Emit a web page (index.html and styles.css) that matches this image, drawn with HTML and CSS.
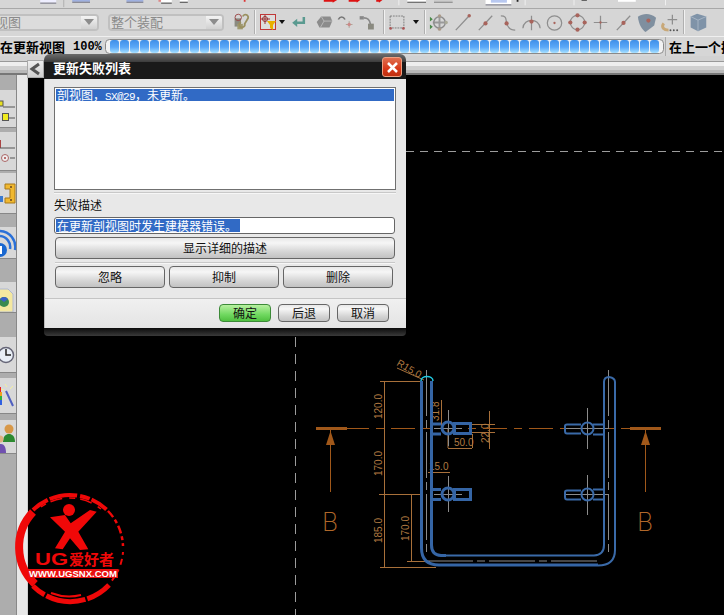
FILE: index.html
```html
<!DOCTYPE html>
<html lang="zh">
<head>
<meta charset="utf-8">
<title>更新失败列表</title>
<link rel="stylesheet" href="styles.css">
</head>
<body>
<div class="app">
  <svg class="strip" width="724" height="9" viewBox="0 0 724 9">
    <rect x="0" y="0" width="18" height="3" fill="#eef"/><rect x="0" y="3" width="18" height="1" fill="#667"/>
    <rect x="26" y="0" width="1" height="8" fill="#aaa"/>
    <rect x="36" y="0" width="20" height="2" fill="#9fb0e0"/><rect x="36" y="2" width="20" height="1" fill="#667"/>
    <rect x="97" y="0" width="19" height="2" fill="#9fb0e0"/><rect x="97" y="2" width="19" height="1" fill="#667"/>
    <rect x="133" y="0" width="3" height="2" fill="#d88"/>
    <rect x="136" y="0" width="12" height="3" fill="#fff"/><rect x="136" y="3" width="12" height="1" fill="#333"/>
    <rect x="157" y="0" width="9" height="2" fill="#fff"/><rect x="157" y="2" width="9" height="1" fill="#333"/>
    <rect x="229" y="0" width="2" height="2" fill="#d33"/>
    <path d="M319 0h10v-1l5 1-5 3v-1h-10z" fill="#d11"/><path d="M347 0h9l4 0-4 3v-1h-9z" fill="#d11"/><path d="M378 0h7l-4 3v-1h-3z" fill="#d11" />
    <rect x="403" y="0" width="1" height="6" fill="#f2f2f2"/>
    <rect x="413" y="0" width="21" height="2" fill="#fff"/><rect x="413" y="2" width="21" height="1" fill="#444"/>
    <rect x="443" y="0" width="21" height="2" fill="#ccc"/><rect x="443" y="2" width="21" height="1" fill="#777"/>
    <rect x="501" y="0" width="29" height="5" fill="#fff"/><rect x="507" y="0" width="18" height="3" fill="#b8c8f0"/><rect x="501" y="5" width="29" height="1" fill="#667"/>
    <rect x="536" y="0" width="2" height="2" fill="#222"/>
    <rect x="545" y="0" width="1" height="6" fill="#f2f2f2"/>
    <rect x="600" y="0" width="1" height="6" fill="#f2f2f2"/>
    <rect x="609" y="0" width="6" height="1" fill="#555"/>
    <rect x="650" y="0" width="20" height="2" fill="#fff"/>
    <rect x="703" y="0" width="1" height="6" fill="#f2f2f2"/>
  </svg>

  <div class="toolbar">
    <div class="combo combo-first"><span class="combo-text">视图</span><span class="combo-arrow"></span></div>
    <div class="combo combo-second"><span class="combo-text">整个装配</span><span class="combo-arrow"></span></div>
    <svg class="ti ti-link" viewBox="0 0 24 24"><rect x="5" y="8" width="7" height="9" fill="#8a8a80"/><rect x="8" y="14" width="6" height="6" fill="#a09a70"/><circle cx="9" cy="7" r="3.500" fill="none" stroke="#944"/><path d="M14 6a3 3 0 1 1 5 3l-3 5a3 3 0 1 1-4-2" fill="none" stroke="#9a9060" stroke-width="2"/></svg>
    <span class="sep sep-a"></span>
    <svg class="ti ti-filter" viewBox="0 0 24 24"><rect x="4.500" y="4.500" width="15" height="15" fill="#ddd" stroke="#c03838"/><path d="M5 9h9M9 5v9" stroke="#933"/><circle cx="9" cy="9" r="2.500" fill="none" stroke="#933"/><path d="M11 11h9l-3 4v5l-3-2v-3z" fill="#e8b000"/></svg>
    <span class="drop drop-a"></span>
    <svg class="ti ti-return" viewBox="0 0 24 24"><path d="M19 6v7h-10" fill="none" stroke="#5a9a90" stroke-width="3"/><path d="M11 8l-6 5 6 5z" fill="#5a9a90"/></svg>
    <svg class="ti ti-box" viewBox="0 0 24 24"><path d="M4 12l5-6h10l2 5-3 7H7z" fill="#8c8c8c"/><path d="M9 6l3 5h9M12 11l-4 7" stroke="#bbb" fill="none"/></svg>
    <svg class="ti ti-rot" viewBox="0 0 24 24"><path d="M4 9c2-4 6-4 8 0" fill="none" stroke="#777" stroke-width="2"/><path d="M13 15h8M17 11v8" stroke="#a98"/><circle cx="17" cy="15" r="2" fill="#c88"/></svg>
    <svg class="ti ti-bend" viewBox="0 0 24 24"><rect x="2" y="5" width="5" height="4" fill="#888"/><path d="M7 7c5 0 7 2 8 8" stroke="#888" stroke-width="2" fill="none"/><rect x="12" y="14" width="7" height="7" fill="#8a8a80"/></svg>
    <span class="sep sep-b"></span>
    <svg class="ti ti-sel" viewBox="0 0 24 24"><rect x="4.500" y="5.500" width="15" height="13" fill="none" stroke="#777" stroke-dasharray="2 1"/><circle cx="5" cy="19" r="1.500" fill="#a55"/><circle cx="19" cy="19" r="1.500" fill="#a55"/></svg>
    <span class="drop drop-b"></span>
    <span class="sep sep-c"></span>
    <svg class="ti" viewBox="0 0 24 24"><path d="M12 5v14M5 12h14" stroke="#999" stroke-width="2"/><circle cx="12" cy="12" r="6" fill="none" stroke="#8c8c8c" stroke-width="1.500"/><circle cx="12" cy="5" r="1.700" fill="#a98"/><circle cx="12" cy="19" r="1.700" fill="#a98"/><circle cx="19" cy="12" r="1.700" fill="#aa9"/><path d="M2 6l3 2.500-3 2.500zM2 14l3 2.500-3 2.500z" fill="#4a8a4a"/></svg>
    <svg class="ti" viewBox="0 0 24 24"><path d="M5 20L19 5" class="gl"/><circle cx="19" cy="5" r="1.800" class="rd"/></svg>
    <svg class="ti" viewBox="0 0 24 24"><path d="M5 20L19 5" class="gl"/><circle cx="12" cy="13" r="2.200" class="rd"/></svg>
    <svg class="ti" viewBox="0 0 24 24"><path d="M4 5c6 0 5 3 6 7 1 5 3 8 9 8" class="gl"/><circle cx="10" cy="13" r="2.200" class="rd"/></svg>
    <svg class="ti" viewBox="0 0 24 24"><path d="M3 18c1-11 17-11 18 0M12 5v15" class="gl"/><circle cx="12" cy="11" r="2.200" class="rd"/></svg>
    <svg class="ti" viewBox="0 0 24 24"><circle cx="12" cy="12.500" r="7.500" class="gl"/><circle cx="12" cy="12.500" r="1.200" class="rd"/></svg>
    <svg class="ti" viewBox="0 0 24 24"><circle cx="12" cy="12" r="7.500" class="gl"/><circle cx="12" cy="4.500" r="2.200" class="rd"/><circle cx="12" cy="19.500" r="2.200" class="rd"/><circle cx="4.500" cy="12" r="2.200" class="rd"/><circle cx="19.500" cy="12" r="2.200" class="rd"/></svg>
    <svg class="ti" viewBox="0 0 24 24"><path d="M12 5v14M5 12h14" class="gl"/><circle cx="12" cy="12" r="1.200" class="rd"/></svg>
    <svg class="ti" viewBox="0 0 24 24"><path d="M5 20L19 5" class="gl"/><circle cx="12" cy="12.500" r="2.200" class="rd"/></svg>
    <svg class="ti" viewBox="0 0 24 24"><path d="M3 6c6-4 13-4 19 1l-2 8-9 7c-4-3-7-8-8-16z" fill="#7f8f9f"/><circle cx="14" cy="10" r="2.200" class="rd"/></svg>
    <svg class="ti" viewBox="0 0 24 24"><path d="M15 4v10M10 9h10" class="gl"/><path d="M6 13c-3 4 0 7 5 7" fill="none" stroke="#c8a878" stroke-width="3"/><circle cx="13" cy="20" r="1" fill="#555"/><circle cx="16.500" cy="20" r="1" fill="#555"/><circle cx="20" cy="20" r="1" fill="#555"/></svg>
    <span class="sep sep-d"></span>
    <svg class="ti ti-cube" viewBox="0 0 24 24"><path d="M4 6l7-3 10 3v12l-9 4-8-4z" fill="#7f93a8"/><path d="M4 6l8 4 9-4M12 10v12" stroke="#a9b7c6" fill="none"/></svg>
  </div>

  <div class="status">
    <span class="status-text">在更新视图</span>
    <span class="status-pct">100%</span>
    <svg class="progress" width="559" height="15" viewBox="0 0 559 15">
      <defs>
        <linearGradient id="seg" x1="0" y1="0" x2="0" y2="1"><stop offset="0" stop-color="#3f8fe8"/><stop offset="0.55" stop-color="#5aa8f8"/><stop offset="1" stop-color="#a6e0ff"/></linearGradient>
        <pattern id="segs" x="5" y="0" width="10" height="15" patternUnits="userSpaceOnUse"><rect x="0" y="1" width="9" height="13" rx="3" fill="url(#seg)"/></pattern>
      </defs>
      <rect x="0.500" y="0.500" width="558" height="14" rx="4" fill="#f2f2f2" stroke="#8a8a8a"/>
      <rect x="5" y="0" width="550" height="15" fill="url(#segs)"/>
    </svg>
    <span class="status-right">在上一个操作</span>
  </div>

  <div class="rule-strip"><span class="back"><svg width="17" height="18" viewBox="0 0 17 18"><path d="M12 4L5 9l7 5" fill="none" stroke="#555" stroke-width="3"/></svg></span></div>

  <div class="main">
    <div class="rail">
      <div class="tiles">
        <div class="tile t1"><svg width="16" height="37" viewBox="0 0 16 37"><rect x="-1" y="11" width="4" height="5" fill="#e8e020" stroke="#555"/><path d="M3 17h12M9 28h6" stroke="#555"/><rect x="2.500" y="23.500" width="6" height="7" fill="#f0ec20" stroke="#555"/></svg></div>
        <div class="tile t2"><svg width="16" height="38" viewBox="0 0 16 38"><rect x="0" y="8" width="1" height="8" fill="#a44"/><path d="M0 16h15M10 26h5" stroke="#555"/><circle cx="5" cy="26" r="3.500" fill="#eee" stroke="#a66"/><circle cx="5" cy="26" r="1" fill="#a44"/></svg></div>
        <div class="tile t3"><svg width="16" height="40" viewBox="0 0 16 40"><path d="M5 11h10v19H5v-5h5V16H5z" fill="#f0b830" stroke="#a87818"/><circle cx="11" cy="14" r="1" fill="#642"/><circle cx="11" cy="27" r="1" fill="#642"/><rect x="0" y="23" width="3" height="6" fill="#3a7ad0"/></svg></div>
        <div class="tile t4"><svg width="16" height="31" viewBox="0 0 16 31"><path d="M0 4a16 16 0 0 1 15 19M0 9a11 11 0 0 1 10 13" fill="none" stroke="#2a70d8" stroke-width="2.500"/><circle cx="0" cy="23" r="7" fill="#1a68d0"/><rect x="0" y="19" width="2" height="8" fill="#fff"/></svg></div>
        <div class="tile t5"><svg width="16" height="30" viewBox="0 0 16 30"><path d="M-1 7h9l5 5v18H-1z" fill="#f4e8a0" stroke="#b0b8d0"/><circle cx="4" cy="20" r="5" fill="#3a8a50"/><path d="M0 17a5 5 0 0 1 8 0l-4 3z" fill="#3a60c8"/></svg></div>
        <div class="tile t6"><svg width="16" height="35" viewBox="0 0 16 35"><circle cx="6" cy="18" r="7.500" fill="#e8eef6" stroke="#667" stroke-width="1.500"/><path d="M6 12v6h5" fill="none" stroke="#222" stroke-width="1.500"/></svg></div>
        <div class="tile t7"><svg width="16" height="35" viewBox="0 0 16 35"><path d="M0 9h1v5H0z" fill="#e82020"/><path d="M0 14h2v4H0z" fill="#f0a020"/><path d="M0 18h2v4H0z" fill="#30b040"/><path d="M0 22h2v5H0z" fill="#3060e0"/><path d="M6 13l7 15" stroke="#5060c0" stroke-width="2"/><path d="M7 9l-2-3M10 11l3-3M4 12l-3-1" stroke="#f4f0a0"/></svg></div>
        <div class="tile t8"><svg width="16" height="33" viewBox="0 0 16 33"><circle cx="9" cy="9" r="4.500" fill="#d89848"/><path d="M3 22c0-6 3-8 6-8s6 2 6 8z" fill="#2c8a30"/><circle cx="0" cy="19" r="3.500" fill="#e0b080"/><path d="M-4 33c0-6 2-9 5-9s5 3 5 9z" fill="#7050b0"/></svg></div>
      </div>
      <div class="rail-light"></div>
    </div>

    <div class="canvas">
      <svg class="drawing" width="696" height="540" viewBox="28 75 696 540">
        <g class="center-lines">
          <path d="M295.500 337V615" stroke-dasharray="10 7"/>
          <path d="M406 151.500H724" stroke-dasharray="8 6"/>
        </g>

        <g class="dims">
          <path d="M380 381.500h41M384.500 381v186M379 494.500h41M411.500 494v67M407 561.500h23M380 567.500h56"/>
          <path d="M397 368l27 12"/>
          <path d="M428 472.500h22M448 448.500h24M472.500 434v14M441.500 400v28M448 428v20M471 424.500h24M471 432.500h24M489.500 411v38"/>
        </g>
        <g class="dim-text">
          <text transform="translate(382 419) rotate(-90)">120.0</text>
          <text transform="translate(382 476) rotate(-90)">170.0</text>
          <text transform="translate(382 543) rotate(-90)">185.0</text>
          <text transform="translate(409 541) rotate(-90)">170.0</text>
          <text transform="translate(396 365) rotate(30)">R15.0</text>
          <text transform="translate(439 421) rotate(-90)">31.8</text>
          <text transform="translate(489 443) rotate(-90)">22.0</text>
          <text x="454" y="446">50.0</text>
          <text x="429" y="470">15.0</text>
        </g>

        <g class="section">
          <path d="M345 428.500H630" stroke-dasharray="24 7 8 7"/>
          <path class="bar" d="M316 428.500h31M630 428.500h31"/>
          <path d="M330.500 430v62M645.500 430v62"/>
          <path class="head" d="M330.500 431l4.500 14h-9zM645.500 431l4.500 14h-9z"/>
        </g>
        <text class="b-letter" x="322" y="531">B</text>
        <text class="b-letter" x="637" y="531">B</text>

        <g class="center-thin">
          <path d="M426.500 370V552M427 561H600" stroke-dasharray="46 4 8 4"/>
          <path d="M608.500 370V552"  stroke-dasharray="46 4 8 4"/>
          <path d="M448.500 410v36M448.500 476v36M587.500 408v41M587.500 475v40M434 428.500h28M434 494.500h28M565 428.500h44M565 494.500h44"/>
        </g>

        <g class="part-heavy">
          <path d="M421.500 381V548Q421.500 565 439 565H598"/>
          <path d="M431.500 381V545Q431.500 555 441 555.500H446"/>
          <path d="M433 424H441M433 434H441M433 489.500H441M433 499.500H441"/>
          <rect x="454.500" y="423.500" width="16" height="10"/>
          <rect x="454.500" y="489.500" width="16" height="10"/>
          <circle cx="448" cy="428" r="6"/>
          <circle cx="448" cy="494" r="6"/>
        </g>
        <g class="part-light">
          <path d="M598 565.500Q615 565.500 615 550V382Q615 378 609 377Q604 377 604 382V545Q604 555 594 555.500H446"/>
          <circle cx="587.500" cy="428.500" r="6"/>
          <circle cx="587.500" cy="494.500" r="6"/>
          <path d="M593 424.500H604M593 434.500H604M593 489.500H604M593 499.500H604"/>
          <path d="M581 424.500H567Q565 424.500 565 426V431Q565 433.500 567 433.500H581M581 490.500H567Q565 490.500 565 492V497Q565 499.500 567 499.500H581"/>
        </g>
        <path class="cyan" d="M421 381c0-6 12-6 12 0"/>
      </svg>
    </div>

    <svg class="logo" width="118" height="120" viewBox="0 0 118 120">
      <g fill="none" stroke="#f00808">
        <path d="M22 22A51 51 0 0 0 24 94" stroke-width="8"/>
        <path d="M22 20A53 53 0 0 1 97 21" stroke-width="4" stroke-dasharray="18 2 28 3 10 2"/>
        <path d="M30 17A50 50 0 0 1 90 19" stroke-width="1.500" stroke-dasharray="6 5 12 7"/>
        <path d="M97 21A53 53 0 0 1 112 56" stroke-width="2.500" stroke-dasharray="8 3 4 3"/>
        <path d="M112 62A53 53 0 0 1 98 94" stroke-width="2" stroke-dasharray="3 4 6 5"/>
        <path d="M98 95A53 53 0 0 1 22 96" stroke-width="5" stroke-dasharray="26 2 40 2"/>
        <path d="M70 105A50 50 0 0 1 40 103" stroke-width="2"/>
      </g>
      <circle cx="58" cy="20" r="6" fill="#f00808"/>
      <path d="M39 27.300L54 25 59.700 33.300 79 20 85.700 21.700 67.300 41.700 77.300 59.300 69 60 59 48.300 51.700 59.300 44 58.300 54 41.700z" fill="#f00808"/>
      <text class="logo-ug" x="24" y="75" textLength="33" lengthAdjust="spacingAndGlyphs">UG</text>
      <text class="logo-cn" x="58" y="75">爱好者</text>
      <rect x="17" y="79" width="90" height="9" fill="#e81010"/>
      <text class="logo-url" x="18" y="87" textLength="88" lengthAdjust="spacingAndGlyphs">WWW.UGSNX.COM</text>
    </svg>
  </div>
</div>

<div class="dialog">
  <div class="title">
    <span class="title-text">更新失败列表</span>
    <span class="close"><svg width="13" height="13" viewBox="0 0 13 13"><path d="M2 2l9 9M11 2l-9 9" stroke="#fff" stroke-width="2.500"/></svg></span>
  </div>
  <div class="body">
    <div class="list"><div class="list-row">剖视图，<span class="mono">SX@29</span>，未更新。</div></div>
    <div class="rule rule-list"></div>
    <div class="label">失败描述</div>
    <div class="field"><span class="field-sel">在更新剖视图时发生建模器错误。</span></div>
    <div class="btn btn-full">显示详细的描述</div>
    <div class="rule rule-mid"></div>
    <div class="btn-row">
      <div class="btn btn-third">忽略</div>
      <div class="btn btn-third">抑制</div>
      <div class="btn btn-third">删除</div>
    </div>
    <div class="foot">
      <div class="btn btn-foot btn-ok">确定</div>
      <div class="btn btn-foot">后退</div>
      <div class="btn btn-foot">取消</div>
    </div>
  </div>
  <div class="shadow"></div>
</div>
</body>
</html>
```
FILE: styles.css
```css
* { box-sizing: border-box; }
html, body { margin: 0; padding: 0; }
body {
  width: 724px;
  height: 615px;
  overflow: hidden;
  position: relative;
  background: #000;
  font-family: "Noto Sans CJK SC", "Liberation Sans", sans-serif;
  font-size: 12px;
  color: #111;
}
svg { display: block; flex: none; }
.app { width: 724px; height: 615px; display: flex; flex-direction: column; }

.strip { background: #d6d6d6; border-bottom: 1px solid #a8a8a8; }

.toolbar {
  height: 28px;
  padding-bottom: 1px;
  background: #d6d6d6;
  border-bottom: 1px solid #efefef;
  display: flex;
  align-items: center;
  overflow: hidden;
}
.combo {
  height: 17px;
  border: 2px solid #c0c0c0;
  border-radius: 4px;
  background: #dcdcdc;
  display: flex;
  align-items: center;
  justify-content: space-between;
  color: #8a8a8a;
  line-height: 14px;
  font-size: 13px;
  overflow: hidden;
  flex: none;
}
.combo-first { width: 106px; margin-left: -7px; }
.combo-second { width: 116px; margin-left: 9px; padding-left: 1px; }
.combo-text { white-space: nowrap; }
.combo-arrow {
  width: 16px;
  height: 13px;
  background: linear-gradient(#f4f4f4, #d0d0d0);
  position: relative;
  flex: none;
}
.combo-arrow::after {
  content: "";
  position: absolute;
  left: 3px;
  top: 3px;
  border-left: 5px solid transparent;
  border-right: 5px solid transparent;
  border-top: 6px solid #8c8c8c;
}
.gl { fill: none; stroke: #8e8e8e; stroke-width: 1.300; }
.rd { fill: #a8645c; }
.ti { width: 23px; height: 23px; }
.ti-link { width: 22px; height: 22px; margin-left: 6px; }
.ti-filter { width: 24px; height: 24px; }
.ti-return { width: 20px; height: 20px; margin-left: 3px; }
.ti-box { width: 22px; height: 22px; margin-left: 5px; }
.ti-rot { width: 20px; height: 20px; }
.ti-bend { width: 20px; height: 20px; margin-left: 3px; }
.ti-sel { width: 22px; height: 22px; margin-left: 1px; }
.ti-cube { width: 22px; height: 22px; margin-left: 2px; }
.sep { width: 2px; height: 24px; background: #f2f2f2; border-left: 1px solid #b0b0b0; flex: none; }
.sep-a { margin: 0 0 0 2px; }
.sep-b { margin: 0 0 0 5px; }
.sep-c { margin: 0 2px 0 5px; }
.sep-d { margin: 0 0 0 2px; }
.drop { width: 0; height: 0; border-left: 3px solid transparent; border-right: 3px solid transparent; border-top: 4px solid #111; flex: none; }
.drop-a { margin-left: -1px; }
.drop-b { margin-left: 5px; }

.status {
  height: 19px;
  background: #d6d6d6;
  display: flex;
  align-items: center;
  font-weight: 700;
  font-size: 13px;
  color: #000;
  overflow: hidden;
  white-space: nowrap;
}
.status-text { width: 73px; flex: none; }
.status-pct { width: 32px; flex: none; font-family: "Liberation Mono", monospace; font-size: 12px; }
.status-right { margin-left: 1px; padding-left: 3px; border-left: 1px solid #aaa; flex: none; }

.rule-strip {
  height: 19px;
  background: linear-gradient(#d2d2d2 0 5px, #999 5px 6px, #eee 6px 10px, #cfcfcf 10px 14px, #b8b8b8 14px 17px, #777 17px);
  position: relative;
}
.back {
  position: absolute;
  left: 27px;
  top: 4px;
  width: 17px;
  height: 18px;
  background: linear-gradient(#eee, #cfcfcf);
  border: 1px solid #aaa;
  z-index: 2;
}
.back svg { margin: -1px; }

.main { flex: 1; display: flex; position: relative; min-height: 0; }
.rail { width: 28px; display: flex; background: #adadad; flex: none; }
.tiles { width: 17px; padding-top: 15px; border-right: 1px solid #888; display: flex; flex-direction: column; }
.rail-light { width: 11px; background: #e8e8e8; border-right: 1px solid #d0d0d0; }
.tile { width: 16px; background: #d8d8d8; border-bottom: 1px solid #888; overflow: hidden; flex: none; }
.t2 { margin-top: 4px; }
.t3 { margin-top: 2px; }
.t4 { margin-top: 13px; }
.t5 { margin-top: 23px; }
.t6 { margin-top: 24px; }
.t7 { margin-top: 5px; }
.t8 { margin-top: 6px; }

.canvas { flex: 1; background: #000; }
.center-lines path { stroke: #9c9c9c; fill: none; stroke-width: 1; }
.dims path { stroke: #a8703a; fill: none; stroke-width: 1; }
.dim-text text { fill: #b07a40; font-family: "Liberation Sans", sans-serif; font-size: 10px; }
.section path { stroke: #a0581a; fill: none; stroke-width: 1; }
.section .bar { stroke-width: 3; }
.section .head { fill: #a0581a; stroke: none; }
.b-letter { fill: #b0682a; font-family: Inter, "Liberation Sans", sans-serif; font-weight: 200; font-size: 25px; }
.center-thin path { stroke: #8c8c8c; fill: none; stroke-width: 1; }
.part-heavy * { stroke: #3565a5; fill: none; stroke-width: 3; }
.part-light * { stroke: #3a6aa8; fill: none; stroke-width: 2; }
.cyan { stroke: #20c8e0; fill: none; stroke-width: 1.500; }

.logo { position: absolute; left: 11px; top: 415px; }
.logo-ug { fill: #f00808; font-weight: 700; font-size: 16px; font-family: "Liberation Sans", sans-serif; }
.logo-cn { fill: #f00808; font-weight: 700; font-size: 15px; font-family: "Noto Sans CJK SC", sans-serif; }
.logo-url { fill: #fff; font-weight: 700; font-size: 9.500px; font-family: "Liberation Sans", sans-serif; }

.dialog { position: absolute; left: 44px; top: 54px; width: 362px; z-index: 5; }
.title {
  height: 25px;
  background: linear-gradient(#6c6c6c 0, #3c3c3c 8px, #1a1a1a 8px);
  border-radius: 6px 6px 0 0;
  display: flex;
  align-items: center;
  justify-content: space-between;
  padding: 1px 4px 0 9px;
}
.title-text { color: #fff; font-weight: 700; font-size: 13px; line-height: 18px; margin-top: 2px; }
.close {
  width: 20px;
  height: 20px;
  border-radius: 3px;
  border: 1px solid #f0a080;
  background: linear-gradient(#e07050, #d83818 60%, #c03010);
  display: flex;
  align-items: center;
  justify-content: center;
}
.body { height: 249px; background: #e8e8e8; padding: 8px 0 0 10px; border-left: 1px solid #bbb; display: flex; flex-direction: column; }
.list { width: 342px; height: 104px; background: #fff; border: 1px solid #707070; padding: 1px; margin-left: -1px; }
.list-row { height: 12px; background: #316ac5; color: #fff; line-height: 12px; font-size: 12px; padding-left: 1px; white-space: nowrap; }
.mono { font-family: "Liberation Mono", monospace; font-size: 11px; letter-spacing: -0.6px; }
.rule { height: 2px; background: #c8c8c8; border-bottom: 1px solid #f6f6f6; flex: none; }
.rule-list { width: 342px; margin: 2px 0 0 -1px; }
.label { margin-top: 2px; line-height: 18px; height: 18px; margin-left: -1px; }
.field { width: 341px; height: 17px; margin: 3px 0 0 -1px; border: 1px solid #666; border-radius: 3px; background: #fff; padding: 1px; line-height: 13px; white-space: nowrap; flex: none; }
.field-sel { display: inline-block; height: 13px; line-height: 13px; padding: 0 3px 0 1px; background: #316ac5; color: #fff; }
.btn {
  border: 1px solid #666;
  border-radius: 4px;
  background: linear-gradient(#e8e8e8, #f6f6f6 25%, #d4d4d4 70%, #c2c2c2);
  display: flex;
  align-items: center;
  justify-content: center;
  color: #111;
  line-height: 14px;
  flex: none;
}
.btn-full { width: 340px; height: 22px; margin-top: 3px; }
.rule-mid { width: 340px; margin-top: 3px; }
.btn-row { display: flex; gap: 4px; margin-top: 2px; }
.btn-third { width: 110px; height: 22px; }
.foot {
  margin: 10px 0 0 -10px;
  border-top: 1px solid #c4c4c4;
  padding: 5px 17px 0 0;
  display: flex;
  justify-content: flex-end;
  gap: 7px;
  height: 30px;
  background: linear-gradient(#f0f0f0, #e4e4e4);
}
.btn-foot { width: 52px; height: 18px; }
.btn-ok { background: linear-gradient(#b8f0a0, #70d860 60%, #50c040); border-color: #3c8a38; }
.shadow { height: 8px; background: linear-gradient(#0c0c0c, #3a3a3a); border-radius: 0 0 4px 4px; }
```
